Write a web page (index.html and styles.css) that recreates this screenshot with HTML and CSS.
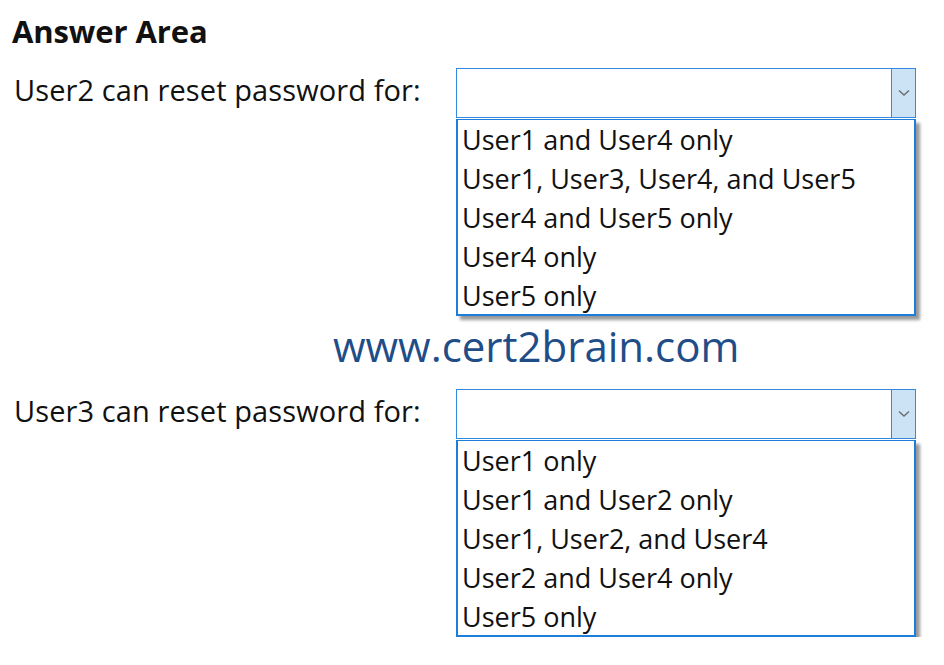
FILE: index.html
```html
<!DOCTYPE html>
<html>
<head>
<meta charset="utf-8">
<link rel="stylesheet" href="styles.css">
</head>
<body>
<div class="page">
  <h1 class="title">Answer Area</h1>
  <div class="row">
    <div class="label">User2 can reset password for:</div>
    <div class="combo">
      <div class="select"><span class="arrow"><svg width="12" height="8" viewBox="0 0 12 8"><path d="M1 1.5 L6 6 L11 1.5" fill="none" stroke="#6d6d6d" stroke-width="1.4"/></svg></span></div>
      <ul class="list">
        <li>User1 and User4 only</li>
        <li>User1, User3, User4, and User5</li>
        <li>User4 and User5 only</li>
        <li>User4 only</li>
        <li>User5 only</li>
      </ul>
    </div>
  </div>
  <div class="watermark">www.cert2brain.com</div>
  <div class="row">
    <div class="label">User3 can reset password for:</div>
    <div class="combo">
      <div class="select"><span class="arrow"><svg width="12" height="8" viewBox="0 0 12 8"><path d="M1 1.5 L6 6 L11 1.5" fill="none" stroke="#6d6d6d" stroke-width="1.4"/></svg></span></div>
      <ul class="list">
        <li>User1 only</li>
        <li>User1 and User2 only</li>
        <li>User1, User2, and User4</li>
        <li>User2 and User4 only</li>
        <li>User5 only</li>
      </ul>
    </div>
  </div>
</div>
</body>
</html>
```
FILE: styles.css
```css
html, body {
  margin: 0;
  padding: 0;
  background: #ffffff;
}
.page {
  font-family: "Open Sans", "Noto Sans", sans-serif;
  color: #111111;
  padding: 13px 0 0 12px;
}
.title {
  margin: 0;
  font-size: 31px;
  font-weight: 700;
  line-height: 36px;
  letter-spacing: -0.1px;
}
.row {
  display: flex;
  align-items: flex-start;
  margin-top: 19px;
}
.label {
  width: 444px;
  font-size: 29px;
  line-height: 32px;
  padding: 6px 0 0 2px;
  box-sizing: border-box;
  letter-spacing: 0.1px;
}
.combo {
  width: 460px;
}
.select {
  height: 50px;
  box-sizing: border-box;
  border: 1px solid #3389de;
  background: #fff;
  display: flex;
  justify-content: flex-end;
}
.arrow {
  width: 23px;
  background: #cce3f6;
  border-left: 1px solid #3389de;
  display: flex;
  align-items: center;
  justify-content: center;
}
.list {
  list-style: none;
  margin: 1px 0 0 0;
  padding: 0 0 3px 0;
  border: 2px solid #1c7ddb;
  border-top-width: 1px;
  box-sizing: border-box;
  height: 197px;
  box-shadow: 4px 4px 3px rgba(0,0,0,0.4);
}
.list li {
  font-size: 27px;
  line-height: 39px;
  padding-left: 4px;
  color: #111;
  white-space: nowrap;
}
.watermark {
  margin: 8px 0 0 321px;
  font-size: 42px;
  line-height: 44px;
  color: #1f4d88;
}
.row + .watermark + .row {
  margin-top: 21px;
}
```
